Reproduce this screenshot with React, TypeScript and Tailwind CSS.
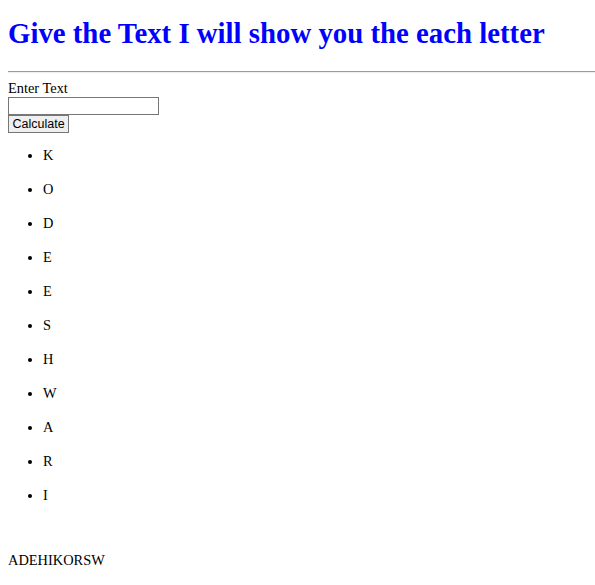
import React from "react";

const letters = ["K", "O", "D", "E", "E", "S", "H", "W", "A", "R", "I"];

const App = () => {
  return (
    <div className="p-2 font-['Liberation_Serif',serif] text-[14.4px] text-black">
      {/* Heading */}
      <h1 className="whitespace-nowrap text-[28.8px] font-bold text-[#0000ff] mt-[9px] mb-[21px] leading-[33px]">
        Give the Text I will show you the each letter
      </h1>
      <hr className="-mr-2 border-t border-t-[#9a9a9a] border-b border-b-[#eeeeee]" />

      {/* Form */}
      <div className="mt-[7px]">
        <label className="block leading-[16px]">Enter Text</label>
        <input
          type="text"
          className="block mt-px w-[151px] h-[18px] border border-[#767676] bg-white px-[2px] text-[13px] font-['Liberation_Sans',sans-serif]"
        />
        <button className="block h-[18px] px-[3.5px] border border-[#767676] bg-[#efefef] text-[12.5px] leading-[15px] font-['Liberation_Sans',sans-serif]">
          Calculate
        </button>
      </div>

      {/* Letters */}
      <ul className="list-disc pl-[35px] mt-[13px] mb-4">
        {letters.map((l, i) => (
          <li key={i} className="my-4 first:mt-0 leading-[18px]">
            {l}
          </li>
        ))}
      </ul>

      <p className="mt-[47px] leading-[18px]">ADEHIKORSW</p>
    </div>
  );
};

export default App;
